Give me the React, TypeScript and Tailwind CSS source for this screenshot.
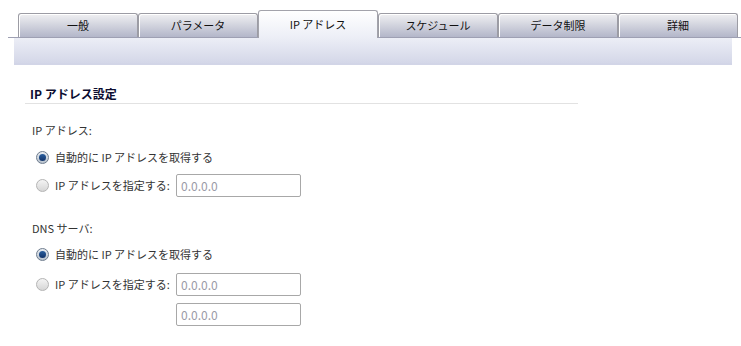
import React from 'react';

const tabs = ['一般', 'パラメータ', 'IP アドレス', 'スケジュール', 'データ制限', '詳細'];
const ACTIVE = 2;

const font = { fontFamily: '"Noto Sans CJK JP", "Liberation Sans", sans-serif' };

const Radio: React.FC<{ checked?: boolean }> = ({ checked }) => (
  <span
    className={
      'inline-flex w-[13px] h-[13px] rounded-full border items-center justify-center shrink-0 ' +
      (checked
        ? 'border-[#6f7d8e] bg-gradient-to-b from-[#e9edf2] to-[#b8c2cd]'
        : 'border-[#b4b4b4] bg-gradient-to-b from-[#f4f4f4] to-[#d6d6d6]')
    }
  >
    {checked && <span className="w-[7px] h-[7px] rounded-full bg-gradient-to-b from-[#2a5f9e] to-[#12336a]" />}
  </span>
);

const IpInput: React.FC = () => (
  <div className="w-[125px] h-[23px] border border-[#a8a8a8] rounded-[2px] bg-white flex items-center pl-[4px] text-[12px] text-[#9a9aa6]">
    0.0.0.0
  </div>
);

const OptionRow: React.FC<{ checked?: boolean; label: string; input?: boolean }> = ({ checked, label, input }) => (
  <div className="flex items-center h-[23px] pl-[37px]">
    <Radio checked={checked} />
    <span className="ml-[6px] w-[121px] shrink-0 whitespace-nowrap">{label}</span>
    {input && <IpInput />}
  </div>
);

export default function App() {
  return (
    <div className="w-[741px] h-[346px] bg-white text-[11px] text-[#333] overflow-hidden" style={font}>
      {/* Tab strip */}
      <div className="flex items-end pl-[18px] pt-[10px] h-[37px]">
        {tabs.map((t, i) =>
          i === ACTIVE ? (
            <div
              key={t}
              className="relative z-10 -mb-px w-[120px] h-[28px] rounded-t-[3px] border border-b-0 border-[#a3a3ab] bg-gradient-to-b from-white to-[#eceef6] flex items-center justify-center text-[#111]"
            >
              {t}
            </div>
          ) : (
            <div
              key={t}
              className="w-[120px] h-[24px] rounded-t-[3px] border border-b-0 border-[#9c9ca4] bg-gradient-to-b from-[#f0f0f2] to-[#b3b6c9] flex items-center justify-center text-[#111] shadow-[inset_1px_1px_0_#ffffff]"
            >
              {t}
            </div>
          )
        )}
      </div>
      <div className="ml-[8px] h-px bg-[#9ea0b3]" />
      <div className="ml-[14px] mr-[9px] h-[27px] bg-gradient-to-b from-[#eceef6] to-[#d4d7e8] border-b-2 border-[#d2d5e7]" />

      {/* Section */}
      <div className="ml-[25px] w-[553px] mt-[22px] pl-[5px] pb-[2px] border-b border-[#e2e2e2] font-bold text-[12px] text-[#0c0c30] leading-[14px]">
        IP アドレス設定
      </div>

      <div className="pl-[32px] mt-[18px] leading-[16px]">IP アドレス:</div>
      <div className="-ml-[1px] mt-[8px] flex flex-col gap-[5px]">
        <OptionRow checked label="自動的に IP アドレスを取得する" />
        <OptionRow label="IP アドレスを指定する:" input />
      </div>

      <div className="pl-[32px] mt-[23px] leading-[16px]">DNS サーバ:</div>
      <div className="-ml-[1px] mt-[7px] flex flex-col gap-[7px]">
        <OptionRow checked label="自動的に IP アドレスを取得する" />
        <OptionRow label="IP アドレスを指定する:" input />
        <div className="pl-[177px]">
          <IpInput />
        </div>
      </div>
    </div>
  );
}
